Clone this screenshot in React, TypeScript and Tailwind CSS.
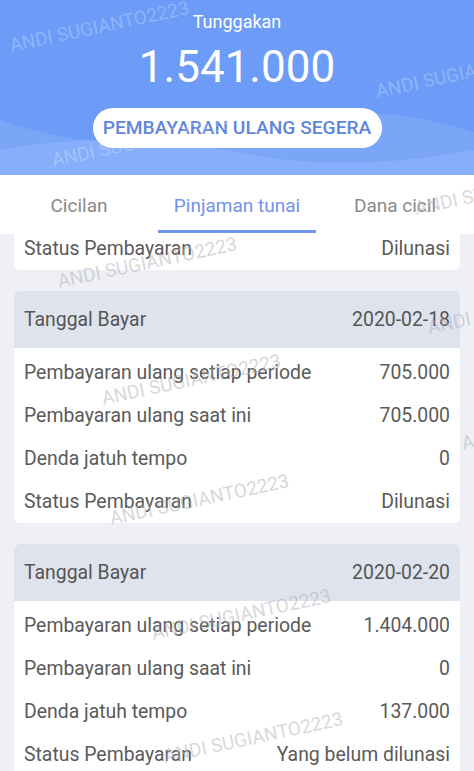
import React from "react";

type Row = { label: string; value: string };
type Tagihan = { tanggal: string; rows: Row[] };

const tagihan: Tagihan[] = [
  {
    tanggal: "2020-02-18",
    rows: [
      { label: "Pembayaran ulang setiap periode", value: "705.000" },
      { label: "Pembayaran ulang saat ini", value: "705.000" },
      { label: "Denda jatuh tempo", value: "0" },
      { label: "Status Pembayaran", value: "Dilunasi" },
    ],
  },
  {
    tanggal: "2020-02-20",
    rows: [
      { label: "Pembayaran ulang setiap periode", value: "1.404.000" },
      { label: "Pembayaran ulang saat ini", value: "0" },
      { label: "Denda jatuh tempo", value: "137.000" },
      { label: "Status Pembayaran", value: "Yang belum dilunasi" },
    ],
  },
];

const tabs = ["Cicilan", "Pinjaman tunai", "Dana cicil"];

// watermark positions (left, top of the text box), rotated
const marks: { x: number; y: number; light?: boolean }[] = [
  { x: 10, y: 32, light: true },
  { x: 376, y: 78, light: true },
  { x: 52, y: 147, light: true },
  { x: 415, y: 195 },
  { x: 58, y: 268 },
  { x: 428, y: 314 },
  { x: 102, y: 385 },
  { x: 462, y: 430 },
  { x: 110, y: 505 },
  { x: 152, y: 620 },
  { x: 164, y: 743 },
];

function DataRow({ label, value }: Row) {
  return (
    <div className="flex h-[43px] items-center justify-between px-[10px] text-[19.4px] text-[#5a5a5a]">
      <span>{label}</span>
      <span>{value}</span>
    </div>
  );
}

export default function App() {
  return (
    <div
      className="relative h-[771px] w-[474px] overflow-hidden bg-[#eef0f6]"
      style={{ fontFamily: "Roboto, 'Noto Sans', sans-serif" }}
    >
      {/* header */}
      <div className="relative h-[175px] overflow-hidden bg-[#6c9cf7]">
        <svg className="absolute inset-0" width="474" height="175" viewBox="0 0 474 175">
          <path d="M0 120 C 90 150, 160 150, 240 128 C 320 106, 400 108, 474 132 L474 175 L0 175 Z" fill="#7ba6f8" />
          <path d="M0 150 C 100 132, 180 140, 260 156 C 340 170, 420 160, 474 150 L474 175 L0 175 Z" fill="#86aefa" />
        </svg>
        <div className="relative flex flex-col items-center pt-[9px] text-white">
          <div className="text-[18px] leading-[26px]">Tunggakan</div>
          <div className="mt-[6px] text-[44px] leading-[52px]">1.541.000</div>
          <button className="mt-[15px] flex h-[40px] w-[289px] items-center justify-center rounded-full bg-white text-[19.2px] font-medium text-[#5f86dc]">
            PEMBAYARAN ULANG SEGERA
          </button>
        </div>
      </div>

      {/* tabs */}
      <div className="grid h-[59px] grid-cols-3 bg-white">
        {tabs.map((t, i) => (
          <div key={t} className="relative flex items-center justify-center pt-[4px] text-[19px]">
            <span className={i === 1 ? "text-[#6f93ea]" : "text-[#8a8a8a]"}>{t}</span>
            {i === 1 && <div className="absolute bottom-[1px] left-0 right-0 h-[3px] bg-[#6f97ee]" />}
          </div>
        ))}
      </div>

      {/* list */}
      <div className="h-[537px] overflow-hidden px-[14px]">
        <div className="-mt-[7px] rounded-b-[6px] bg-white">
          <DataRow label="Status Pembayaran" value="Dilunasi" />
        </div>
        {tagihan.map((t) => (
          <div key={t.tanggal} className="mt-[21px] overflow-hidden rounded-[6px] bg-white">
            <div className="flex h-[57px] items-center justify-between bg-[#dfe3ee] px-[10px] text-[19.4px] text-[#555]">
              <span>Tanggal Bayar</span>
              <span>{t.tanggal}</span>
            </div>
            <div className="pt-[3px]">
              {t.rows.map((r) => (
                <DataRow key={r.label} {...r} />
              ))}
            </div>
          </div>
        ))}
      </div>

      {/* watermark */}
      {marks.map((m, i) => (
        <div
          key={i}
          className={
            "pointer-events-none absolute origin-left -rotate-[12deg] whitespace-nowrap text-[19px] " +
            (m.light ? "text-white/25" : "text-[#b0b0b8]/50")
          }
          style={{ left: m.x, top: m.y }}
        >
          ANDI SUGIANTO2223
        </div>
      ))}
    </div>
  );
}
